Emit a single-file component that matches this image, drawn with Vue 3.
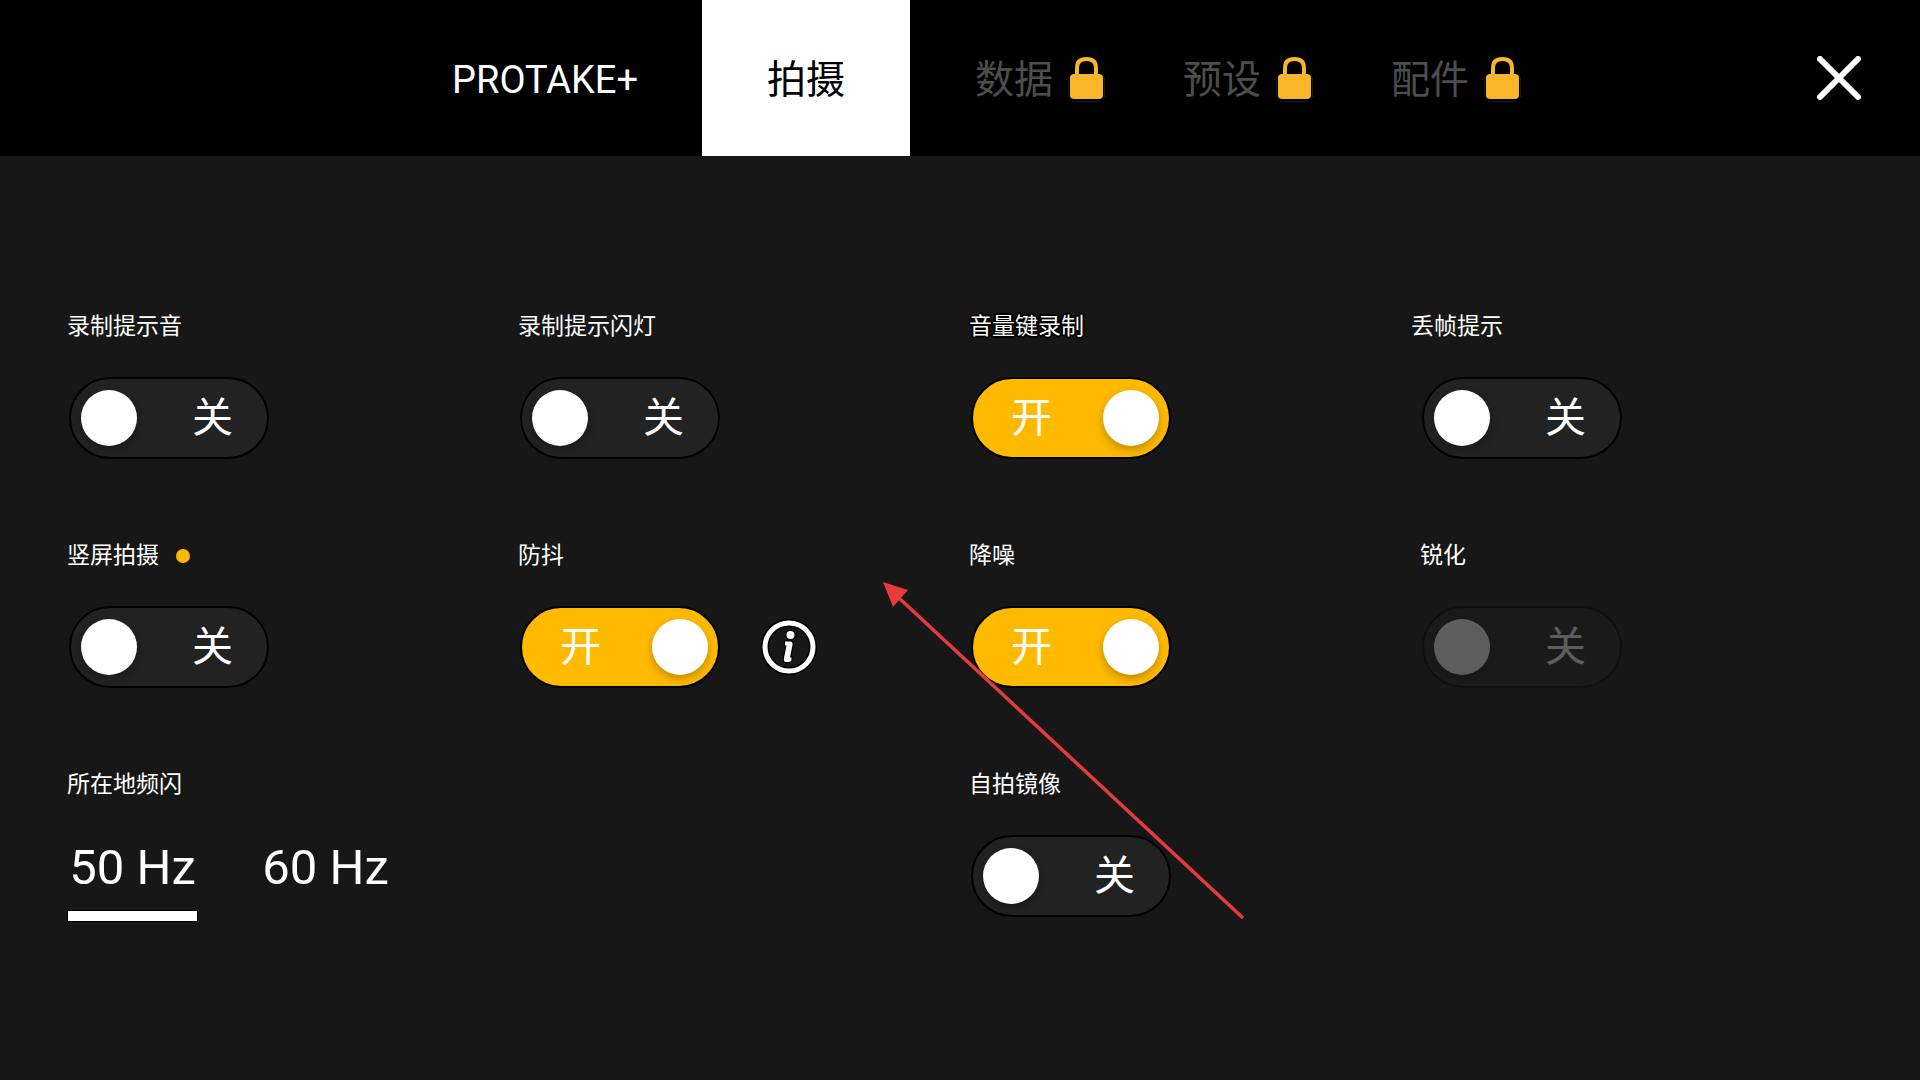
<script setup>
import { ref, reactive } from 'vue'

const activeTab = ref('shoot')
const tabs = [
  { id: 'plus', name: 'PROTAKE+', wide: true },
  { id: 'shoot', name: '拍摄' },
  { id: 'data', name: '数据', locked: true },
  { id: 'preset', name: '预设', locked: true },
  { id: 'accessory', name: '配件', locked: true },
]

const settings = reactive([
  { id: 'record-sound', name: '录制提示音', on: false },
  { id: 'record-flash', name: '录制提示闪灯', on: false },
  { id: 'volume-key', name: '音量键录制', on: true, outlined: true },
  { id: 'frame-drop', name: '丢帧提示', on: false, outdent: true },
  { id: 'portrait', name: '竖屏拍摄', on: false, dot: true },
  { id: 'stabilizer', name: '防抖', on: true, info: true },
  { id: 'denoise', name: '降噪', on: true },
  { id: 'sharpen', name: '锐化', on: false, disabled: true },
  { id: 'mirror', name: '自拍镜像', on: false, third: true },
])

const flicker = ref('50')
const rates = ['50', '60']
</script>

<template>
  <div class="screen">
    <header class="topbar">
      <nav class="tabs">
        <button
          v-for="tab in tabs"
          :key="tab.id"
          type="button"
          class="tab"
          :class="{ wide: tab.wide, active: activeTab === tab.id, locked: tab.locked }"
          :disabled="tab.locked"
          @click="activeTab = tab.id"
        >
          <span>{{ tab.name }}</span>
          <svg v-if="tab.locked" class="lock" viewBox="0 0 37 46" aria-hidden="true">
            <path d="M9 20V11C9 5 12 2 18.500 2S28 5 28 11V20" fill="none" stroke="#f8b62d" stroke-width="4" />
            <rect x="2" y="17" width="33" height="25" rx="4" fill="#f8b62d" />
            <path d="M4 44.500H33M.5 20V40M36.500 20V40" fill="none" stroke="#1d1a0c" stroke-width="1" />
          </svg>
        </button>
      </nav>
      <button type="button" class="close" aria-label="关闭">
        <svg viewBox="0 0 44 44" aria-hidden="true">
          <path d="M3 3L41 41M41 3L3 41" fill="none" stroke="#fff" stroke-width="6" stroke-linecap="round" />
        </svg>
      </button>
    </header>

    <main class="panel">
      <section
        v-for="item in settings"
        :key="item.id"
        class="setting"
        :class="{ third: item.third }"
      >
        <label
          class="title"
          :class="{ outlined: item.outlined, outdent: item.outdent }"
          :for="item.id"
        >
          {{ item.name }}
          <i v-if="item.dot" class="dot"></i>
        </label>
        <div class="control">
          <label class="switch">
            <input :id="item.id" v-model="item.on" type="checkbox" role="switch" :disabled="item.disabled" />
            <span class="track">
              <span class="state">{{ item.on ? '开' : '关' }}</span>
              <span class="knob"></span>
            </span>
          </label>
          <button v-if="item.info" type="button" class="info" aria-label="说明">
            <svg viewBox="0 0 56 56" aria-hidden="true">
              <circle cx="28" cy="28" r="24" fill="none" stroke="#000" stroke-width="8" />
              <circle cx="28" cy="28" r="24" fill="none" stroke="#fff" stroke-width="5" />
              <g stroke="#000" stroke-width="2" paint-order="stroke" fill="#fff">
                <circle cx="29.500" cy="16" r="4" />
                <path d="M24 22.500H29C31 22.500 32 23.500 31.500 26L29 38.500H30.500V40C30.500 42 29.500 43 27.500 43H25.500C23 43 22.500 41.500 23 39L25.500 26.500H24Z" />
              </g>
            </svg>
          </button>
        </div>
      </section>

      <fieldset class="setting flicker">
        <legend class="title">所在地频闪</legend>
        <div class="rates">
          <label v-for="rate in rates" :key="rate" class="rate">
            <input v-model="flicker" type="radio" name="flicker" :value="rate" />
            <span>{{ rate }} Hz</span>
          </label>
        </div>
      </fieldset>

      <svg class="arrow" viewBox="0 0 362 340" aria-hidden="true">
        <path d="M16 16L360 336" stroke="#e53b3c" stroke-width="3.5" />
        <path d="M0 0L25 8L10 25Z" fill="#e53b3c" />
      </svg>
    </main>
  </div>
</template>

<style>
body {
  margin: 0;
  background: #171717;
}
</style>

<style scoped>
.screen {
  min-height: 100vh;
  background: #171717;
  color: #fff;
  font-family: Roboto, "Noto Sans CJK SC", sans-serif;
}
button {
  margin: 0;
  padding: 0;
  border: 0;
  background: none;
  color: inherit;
  font: inherit;
}
svg {
  display: block;
}
.topbar {
  display: grid;
  grid-template-columns: 1fr auto 1fr;
  align-items: center;
  height: 156px;
  background: #000;
}
.tabs {
  grid-column: 2;
  display: flex;
  height: 156px;
  margin-left: 2px;
}
.tab {
  display: flex;
  align-items: center;
  gap: 15px;
  box-sizing: border-box;
  width: 208px;
  padding: 4px 0 0 65px;
  font-size: 39px;
  line-height: 56px;
  white-space: nowrap;
}
.tab.wide {
  width: 314px;
  padding-left: 64px;
  font-size: 38px;
}
.tab.active {
  background: #fff;
  color: #000;
}
.tab.locked {
  color: #4d4d4d;
}
.lock {
  flex: none;
  width: 37px;
  height: 46px;
}
.close {
  justify-self: end;
  width: 44px;
  height: 44px;
  margin-right: 59px;
}
.panel {
  position: relative;
  display: grid;
  grid-template-columns: repeat(4, 1fr);
  row-gap: 81px;
  padding: 155px 47px 80px 69px;
}
.setting {
  min-width: 0;
  margin: 0;
  padding: 0;
  border: 0;
}
.third {
  grid-area: 3 / 3;
}
.flicker {
  grid-area: 3 / 1;
}
.title {
  display: flex;
  align-items: center;
  gap: 17px;
  height: 32px;
  margin: 0 0 34px -2px;
  padding: 0;
  font-size: 23px;
  line-height: 32px;
}
.title.outlined {
  text-shadow: 2px 0 1px #000, -2px 0 1px #000, 0 2px 1px #000, 0 -2px 1px #000, 1px 1px 1px #000, -1px -1px 1px #000, 1px -1px 1px #000, -1px 1px 1px #000;
}
.title.outdent {
  margin-left: -11px;
}
.dot {
  width: 14px;
  height: 14px;
  border-radius: 50%;
  background: #ffba00;
}
.control {
  display: flex;
  align-items: center;
  gap: 41px;
}
.switch input,
.rate input {
  position: absolute;
  opacity: 0;
  margin: 0;
}
.track {
  display: flex;
  flex-direction: row-reverse;
  align-items: center;
  justify-content: space-between;
  box-sizing: border-box;
  width: 200px;
  height: 82px;
  padding: 0 34px 0 10px;
  border: 2px solid #000;
  border-radius: 41px;
  background: #222;
}
.knob {
  width: 56px;
  height: 56px;
  border-radius: 50%;
  background: #fff;
  box-shadow: 0 4px 10px rgba(0, 0, 0, 0.25);
}
.state {
  font-size: 41px;
  line-height: 56px;
}
.switch input:checked + .track {
  flex-direction: row;
  padding: 0 10px 0 38px;
  background: #ffba00;
}
.switch input:disabled + .track {
  opacity: 0.3;
}
.info {
  width: 56px;
  height: 56px;
}
.rates {
  display: flex;
  gap: 62px;
  margin-left: -2px;
}
.rate {
  width: 131px;
  font-size: 49px;
  line-height: 66px;
  text-align: center;
  white-space: nowrap;
}
.rate input:checked + span::after {
  content: "";
  display: block;
  box-sizing: border-box;
  height: 12px;
  margin-top: 9px;
  border: 1px solid #000;
  background: #fff;
}
.arrow {
  position: absolute;
  top: 426px;
  left: 883px;
  width: 362px;
  height: 340px;
  pointer-events: none;
}
</style>
